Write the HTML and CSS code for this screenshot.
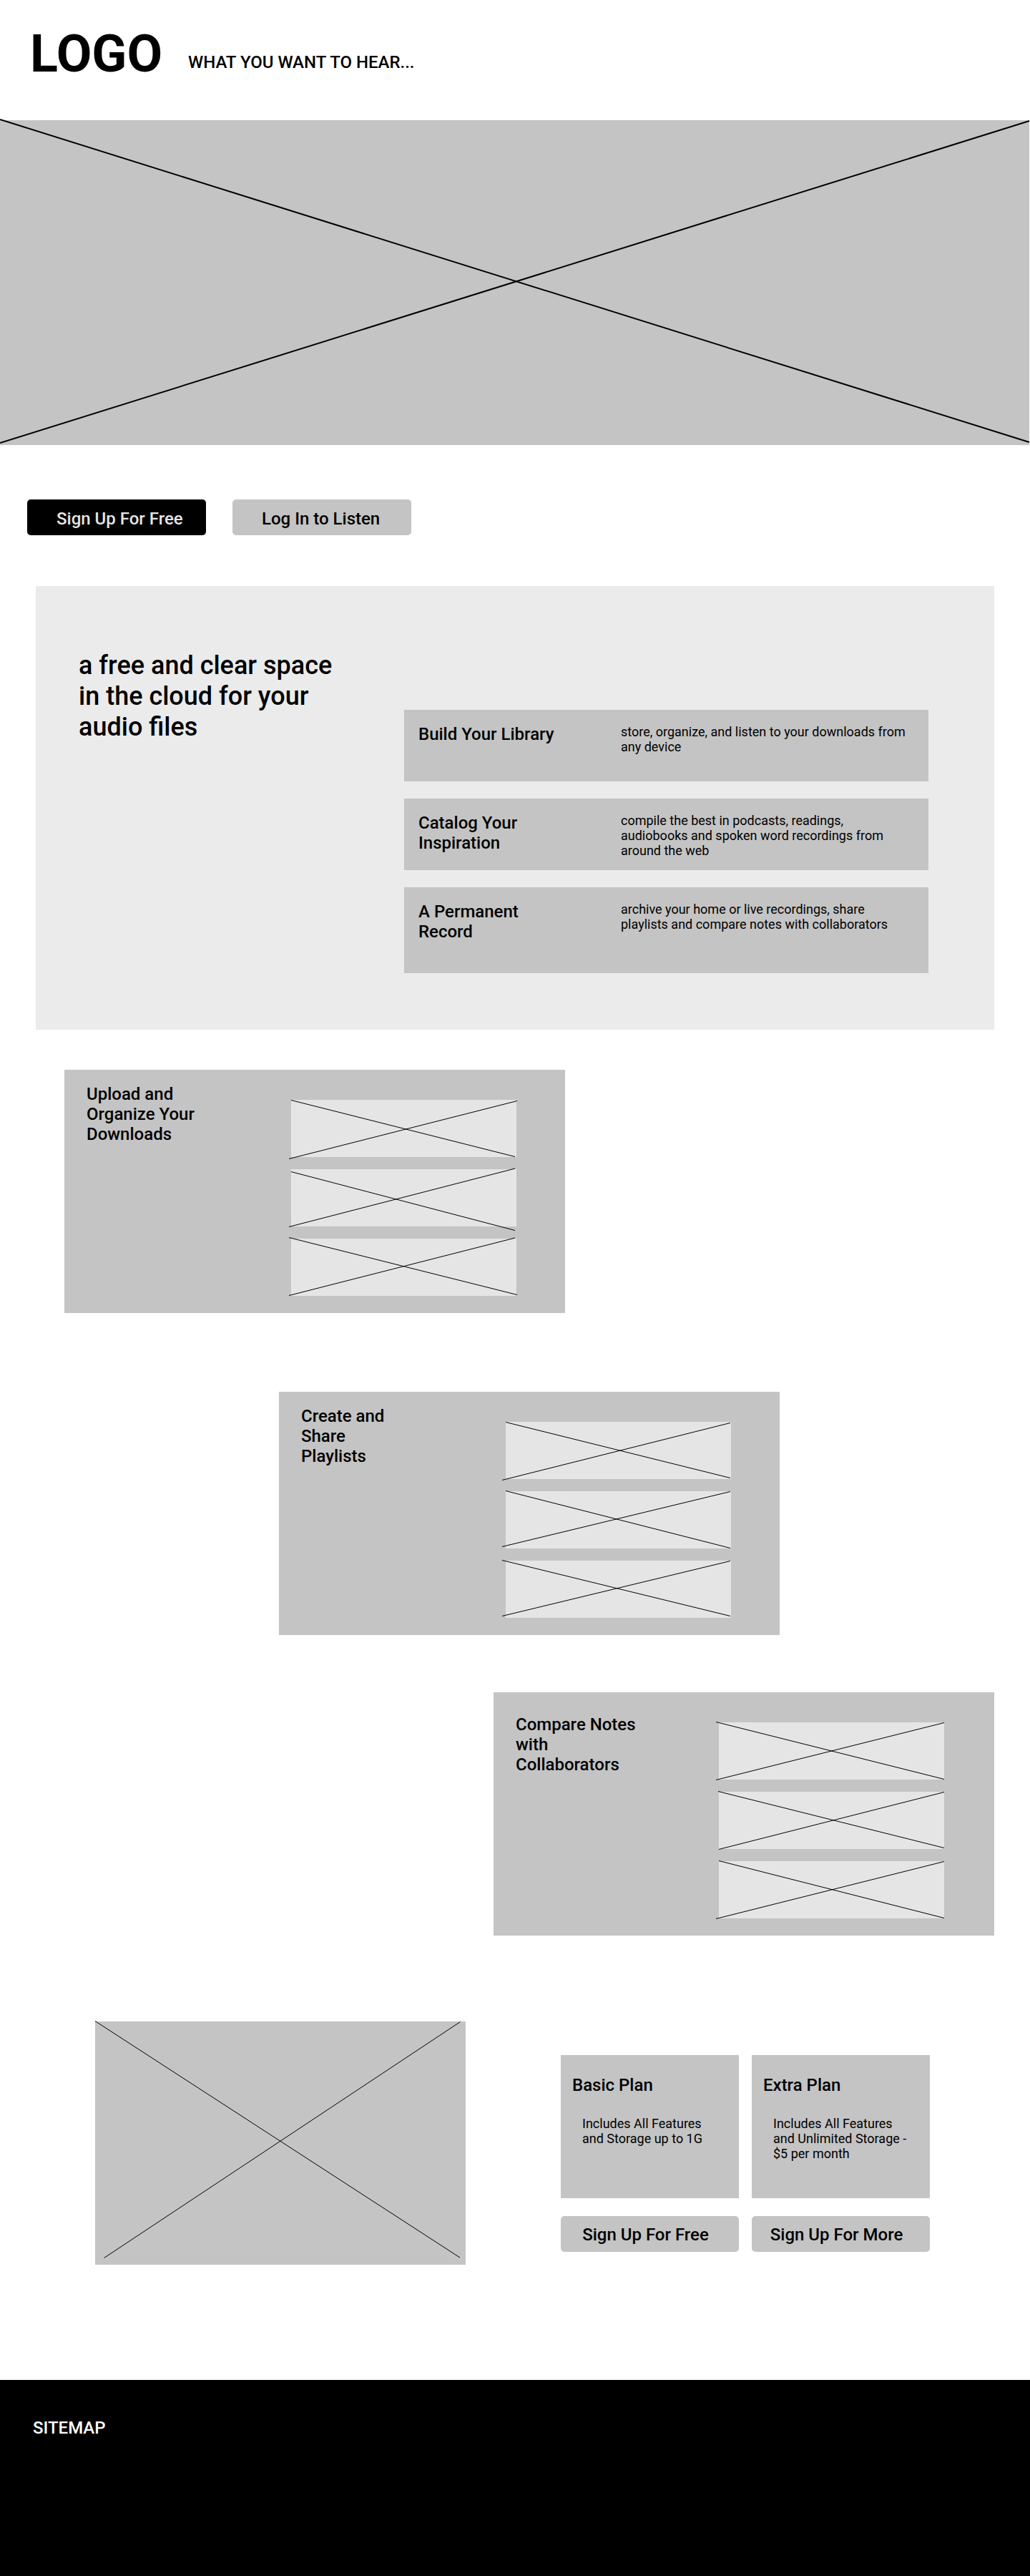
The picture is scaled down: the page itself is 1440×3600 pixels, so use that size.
FILE: index.html
```html
<!DOCTYPE html>
<html lang="en">
<head>
  <meta charset="utf-8">
  <meta name="viewport" content="width=device-width, initial-scale=1">
  <title>What you want to hear</title>
  <link rel="stylesheet" href="styles.css">
</head>
<body>
  <header class="site-header">
    <h1 class="logo">LOGO</h1>
    <p class="tagline">WHAT YOU WANT TO HEAR...</p>
  </header>

  <main>
    <div class="hero">
      <svg class="cross cross-bold" viewBox="0 0 1439 454" preserveAspectRatio="none" aria-hidden="true">
        <path d="M0 -1 L1439 450"/><path d="M0 451 L1439 1"/>
      </svg>
    </div>

    <div class="actions">
      <button type="button" class="button button-dark">Sign Up For Free</button>
      <button type="button" class="button">Log In to Listen</button>
    </div>

    <section class="intro">
      <h2 class="intro-title">a free and clear space in the cloud for your audio files</h2>
      <ul class="benefits">
        <li class="benefit">
          <h3 class="heading">Build Your Library</h3>
          <p class="copy">store, organize, and listen to your downloads from any device</p>
        </li>
        <li class="benefit">
          <h3 class="heading">Catalog Your Inspiration</h3>
          <p class="copy">compile the best in podcasts, readings, audiobooks and spoken word recordings from around the web</p>
        </li>
        <li class="benefit benefit-tall">
          <h3 class="heading">A Permanent Record</h3>
          <p class="copy">archive your home or live recordings, share playlists and compare notes with collaborators</p>
        </li>
      </ul>
    </section>

    <div class="features">
      <section class="feature feature-start">
        <h2 class="heading">Upload and Organize Your Downloads</h2>
        <div class="thumbs">
          <div class="thumb"><svg class="cross" viewBox="0 0 315 80" preserveAspectRatio="none" aria-hidden="true"><path d="M0 .5 L313 79.500"/><path d="M-3 82.500 L316 1.500"/></svg></div>
          <div class="thumb"><svg class="cross" viewBox="0 0 315 80" preserveAspectRatio="none" aria-hidden="true"><path d="M0 3.500 L313 85.500"/><path d="M-3 80.500 L313 -1"/></svg></div>
          <div class="thumb"><svg class="cross" viewBox="0 0 315 80" preserveAspectRatio="none" aria-hidden="true"><path d="M-3 -1.500 L316 78.500"/><path d="M-3 79.500 L313 -1"/></svg></div>
        </div>
      </section>

      <section class="feature feature-middle">
        <h2 class="heading">Create and Share Playlists</h2>
        <div class="thumbs">
          <div class="thumb"><svg class="cross" viewBox="0 0 315 80" preserveAspectRatio="none" aria-hidden="true"><path d="M0 .5 L314 78.500"/><path d="M-5 81.500 L314 1.500"/></svg></div>
          <div class="thumb"><svg class="cross" viewBox="0 0 315 80" preserveAspectRatio="none" aria-hidden="true"><path d="M0 -.5 L314 79.500"/><path d="M-5 77.500 L314 .5"/></svg></div>
          <div class="thumb"><svg class="cross" viewBox="0 0 315 80" preserveAspectRatio="none" aria-hidden="true"><path d="M-5 -.5 L314 77.500"/><path d="M-5 77.500 L314 .5"/></svg></div>
        </div>
      </section>

      <section class="feature feature-end">
        <h2 class="heading">Compare Notes with Collaborators</h2>
        <div class="thumbs">
          <div class="thumb"><svg class="cross" viewBox="0 0 315 80" preserveAspectRatio="none" aria-hidden="true"><path d="M-4 -.5 L315 79.500"/><path d="M-4 80.500 L315 .5"/></svg></div>
          <div class="thumb"><svg class="cross" viewBox="0 0 315 80" preserveAspectRatio="none" aria-hidden="true"><path d="M-1 -.5 L315 78.500"/><path d="M0 80.500 L315 .5"/></svg></div>
          <div class="thumb"><svg class="cross" viewBox="0 0 315 80" preserveAspectRatio="none" aria-hidden="true"><path d="M0 -.5 L315 79.500"/><path d="M-4 80.500 L315 .5"/></svg></div>
        </div>
      </section>
    </div>

    <section class="pricing">
      <div class="picture">
        <svg class="cross" viewBox="0 0 518 340" preserveAspectRatio="none" aria-hidden="true"><path d="M0 -.5 L510 330"/><path d="M12.500 330.500 L510.500 .5"/></svg>
      </div>
      <div class="plans">
        <article class="plan">
          <div class="plan-card">
            <h2 class="heading">Basic Plan</h2>
            <p class="copy">Includes All Features and Storage up to 1G</p>
          </div>
          <button type="button" class="button button-plan">Sign Up For Free</button>
        </article>
        <article class="plan">
          <div class="plan-card">
            <h2 class="heading">Extra Plan</h2>
            <p class="copy">Includes All Features and Unlimited Storage - $5 per month</p>
          </div>
          <button type="button" class="button button-plan">Sign Up For More</button>
        </article>
      </div>
    </section>
  </main>

  <footer class="site-footer">
    <a class="footer-link" href="#">SITEMAP</a>
  </footer>
</body>
</html>
```
FILE: styles.css
```css
* {
  box-sizing: border-box;
}

body,
h1,
h2,
h3,
p,
ul {
  margin: 0;
  padding: 0;
}

body {
  display: flex;
  flex-direction: column;
  min-height: 100vh;
  background: #fff;
  color: #000;
  font-family: Roboto, "Liberation Sans", sans-serif;
  font-size: 18px;
  line-height: 21px;
}

.site-header {
  display: flex;
  align-items: flex-end;
  gap: 36px;
  padding: 34px 42px 50px;
}

.logo {
  font-size: 72px;
  font-weight: 700;
  line-height: 84px;
}

.tagline {
  padding-bottom: 17px;
}

.tagline,
.heading {
  font-size: 24px;
  font-weight: 500;
  line-height: 28px;
}

.copy {
  font-size: 18px;
  line-height: 21px;
}

.hero {
  height: 454px;
  margin-right: 1px;
  background: #c4c4c4;
}

.cross {
  display: block;
  width: 100%;
  height: 100%;
  overflow: visible;
  fill: none;
  stroke: #000;
  stroke-width: 1px;
}

.cross-bold {
  stroke-width: 2px;
}

.cross path {
  vector-effect: non-scaling-stroke;
}

.actions {
  display: flex;
  gap: 37px;
  padding: 76px 38px 71px;
}

.button {
  width: 250px;
  height: 50px;
  padding: 13px 0 9px 41px;
  border: 0;
  border-radius: 5px;
  background: #c4c4c4;
  color: #000;
  font: 500 24px/28px Roboto, "Liberation Sans", sans-serif;
  text-align: left;
  cursor: pointer;
}

.button-dark {
  background: #000;
  color: #e5e5e5;
}

.button-plan {
  width: 100%;
  padding: 12px 12px 10px 0;
  text-align: center;
}

.intro {
  display: grid;
  grid-template-columns: 455px 1fr;
  margin: 0 50px;
  padding: 90px 92px 79px 60px;
  background: #ebebeb;
}

.intro-title {
  max-width: 380px;
  font-size: 36px;
  font-weight: 500;
  line-height: 43px;
}

.benefits {
  display: grid;
  gap: 24px;
  margin-top: 83px;
  list-style: none;
}

.benefit {
  display: grid;
  grid-template-columns: 200px 400px;
  justify-content: space-between;
  min-height: 100px;
  padding: 20px 30px 16px 20px;
  background: #c4c4c4;
}

.benefit-tall {
  min-height: 120px;
}

.features {
  display: flex;
  flex-direction: column;
  padding: 56px 50px 0 90px;
}

.feature {
  display: flex;
  justify-content: space-between;
  width: 700px;
  min-height: 340px;
  padding: 20px 68px 22px 31px;
  background: #c4c4c4;
}

.feature .heading {
  width: 170px;
}

.feature-start {
  align-self: flex-start;
}

.feature-middle {
  align-self: center;
  margin-top: 110px;
}

.feature-middle .heading {
  width: 130px;
}

.feature-end {
  align-self: flex-end;
  margin-top: 80px;
  padding-right: 70px;
}

.feature-end .heading {
  padding-top: 11px;
}

.thumbs {
  display: grid;
  gap: 17px;
  align-content: start;
  width: 315px;
  padding-top: 22px;
}

.thumb {
  height: 80px;
  background: #e5e5e5;
}

.pricing {
  display: grid;
  grid-template-columns: 518fr 516fr;
  gap: 133px;
  padding: 120px 140px 161px 133px;
}

.picture {
  height: 340px;
  background: #c4c4c4;
}

.plans {
  display: grid;
  grid-template-columns: 1fr 1fr;
  gap: 18px;
  padding-top: 47px;
}

.plan {
  display: grid;
  gap: 25px;
  align-content: start;
}

.plan-card {
  display: grid;
  gap: 29px;
  align-content: start;
  min-height: 200px;
  padding: 28px 27px 20px 16px;
  background: #c4c4c4;
}

.plan-card .copy {
  padding-left: 14px;
}

.site-footer {
  flex: 1;
  padding: 53px 46px;
  background: #000;
}

.footer-link {
  color: #fff;
  font-size: 24px;
  font-weight: 500;
  line-height: 28px;
  text-decoration: none;
}
```
